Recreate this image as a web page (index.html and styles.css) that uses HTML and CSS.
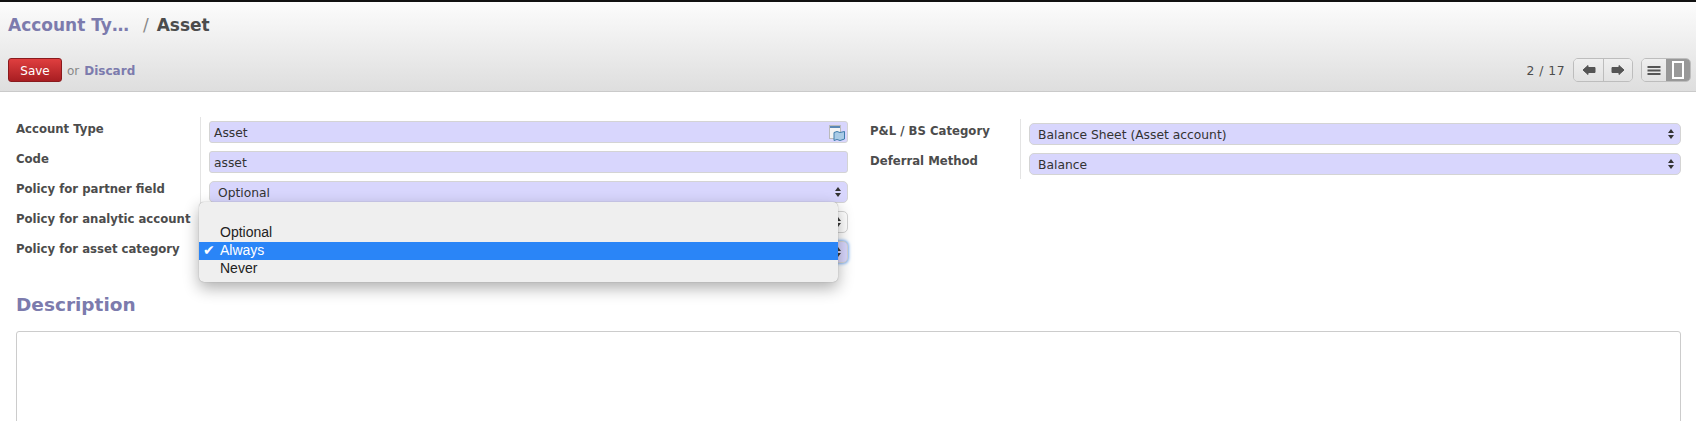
FILE: index.html
```html
<!DOCTYPE html>
<html lang="en">

<head>
  <meta charset="UTF-8">
  <title>Asset - Account Types</title>
  <link rel="stylesheet" href="styles.css">
</head>

<body>
  <header class="control-panel">
    <h2 class="breadcrumb">
      <a href="#" class="crumb-link">Account Ty…</a>
      <span class="crumb-sep">/</span>
      <span class="crumb-current">Asset</span>
    </h2>
    <div class="toolbar">
      <div class="actions">
        <button class="save-btn" type="button">Save</button>
        <span class="or-text">or</span>
        <a href="#" class="discard-link">Discard</a>
      </div>
      <div class="pager-area">
        <span class="pager-count">2 / 17</span>
        <div class="btn-group">
          <button class="group-btn pager-btn" type="button" aria-label="Previous">
            <svg width="14" height="12" viewBox="0 0 14 12"><path d="M1 6 6 1.500V3.500H13V8.500H6V10.500Z" fill="#555" stroke="#555" stroke-linejoin="round"/></svg>
          </button>
          <button class="group-btn pager-btn" type="button" aria-label="Next">
            <svg width="14" height="12" viewBox="0 0 14 12"><path d="M13 6 8 1.500V3.500H1V8.500H8V10.500Z" fill="#555" stroke="#555" stroke-linejoin="round"/></svg>
          </button>
        </div>
        <div class="btn-group">
          <button class="group-btn view-btn" type="button" aria-label="List">
            <svg width="14" height="11" viewBox="0 0 14 11"><path d="M0.500 1h13v2H0.500zM0.500 4.500h13v2H0.500zM0.500 8h13v2H0.500z" fill="#555"/></svg>
          </button>
          <button class="group-btn view-btn view-active" type="button" aria-label="Form">
            <svg width="14" height="18" viewBox="0 0 14 18"><rect x="2" y="1" width="10" height="16" fill="#999" stroke="#fff" stroke-width="2"/></svg>
          </button>
        </div>
      </div>
    </div>
  </header>

  <main class="sheet">
    <div class="columns">
      <div class="field-group group-left">
        <label class="field-label">Account Type</label>
        <div class="field field-required field-many2one">
          <span>Asset</span>
          <svg class="open-icon" width="16" height="16" viewBox="0 0 16 16">
            <rect x="0.500" y="0.500" width="11" height="13" fill="#f4f4f4" stroke="#bbb"/>
            <rect x="1" y="1" width="10" height="2" fill="#5b88b5"/>
            <path d="M5 7.500 8 6.500 11 7.500 15.500 6.500V14L11 15.500 8 14.500 5 15.500Z" fill="#a9cbe6" stroke="#3f7cab"/>
          </svg>
        </div>

        <label class="field-label">Code</label>
        <div class="field field-required"><span>asset</span></div>

        <label class="field-label">Policy for partner field</label>
        <div class="field field-required field-select"><span>Optional</span><i class="updown"></i></div>

        <label class="field-label">Policy for analytic account</label>
        <div class="field field-select"><span></span><i class="updown"></i></div>

        <label class="field-label">Policy for asset category</label>
        <div class="field field-required field-select field-focus"><span></span><i class="updown"></i></div>
      </div>

      <div class="field-group group-right">
        <label class="field-label">P&amp;L / BS Category</label>
        <div class="field field-required field-select"><span>Balance Sheet (Asset account)</span><i class="updown"></i></div>

        <label class="field-label">Deferral Method</label>
        <div class="field field-required field-select"><span>Balance</span><i class="updown"></i></div>
      </div>
    </div>

    <h3 class="section-title">Description</h3>
    <div class="description-box"></div>
  </main>

  <ul class="select-menu">
    <li class="menu-item menu-blank"></li>
    <li class="menu-item">Optional</li>
    <li class="menu-item menu-selected">Always</li>
    <li class="menu-item">Never</li>
  </ul>
</body>

</html>
```

FILE: styles.css
```css
html,
body {
  height: 100%;
}

body {
  margin: 0;
  overflow: hidden;
  background: #fff;
  color: #4c4c4c;
  font-family: "DejaVu Sans", sans-serif;
  font-size: 12px;
}

a {
  color: #7c7bad;
  text-decoration: none;
}

/* top bar */
.control-panel {
  box-sizing: border-box;
  height: 92px;
  border-top: 2px solid #111;
  border-bottom: 1px solid #cacaca;
  padding: 0 5px 0 8px;
  background: linear-gradient(#fcfcfc, #dedede);
}

.breadcrumb {
  display: flex;
  align-items: baseline;
  margin: 0;
  padding-top: 13px;
  height: 33px;
  font-size: 17px;
  line-height: 20px;
  font-weight: 700;
}

.crumb-sep {
  margin: 0 8px 0 14px;
  color: #888;
  font-weight: 400;
}

.crumb-current {
  color: #4c4c4c;
}

.toolbar {
  display: flex;
  justify-content: space-between;
  align-items: center;
  margin-top: 10px;
}

.actions {
  display: flex;
  align-items: center;
  gap: 5px;
}

.save-btn {
  width: 54px;
  height: 24px;
  padding: 2px 0 0;
  border: 1px solid #8a1a1d;
  border-radius: 3px;
  background: linear-gradient(#df3f3f, #a81e22);
  color: #fff;
  font: 400 12px "DejaVu Sans", sans-serif;
}

.or-text {
  padding-top: 2px;
  color: #888;
}

.discard-link {
  padding-top: 2px;
  font-weight: 700;
}

.pager-area {
  display: flex;
  align-items: center;
}

.pager-count {
  margin-right: 8px;
  padding-top: 2px;
  font-size: 12.3px;
  letter-spacing: 0.5px;
}

.btn-group {
  display: flex;
  box-sizing: border-box;
  height: 24px;
  border: 1px solid #bdbdbd;
  border-radius: 5px;
  overflow: hidden;
  margin-right: 8px;
}

.btn-group:last-child {
  margin-right: 0;
}

.group-btn {
  display: flex;
  align-items: center;
  justify-content: center;
  padding: 0;
  border: 0;
  background: linear-gradient(#efefef, #e2e2e2);
}

.pager-btn {
  width: 29px;
}

.pager-btn + .pager-btn {
  border-left: 1px solid #bdbdbd;
}

.view-btn {
  width: 24px;
}

.view-active {
  background: #989898;
}

/* form */
.sheet {
  padding: 0 15px 0 16px;
}

.columns {
  display: flex;
  margin-top: 26px;
}

.field-group {
  display: grid;
  grid-auto-rows: 22px;
  row-gap: 8px;
}

.group-left {
  grid-template-columns: 184px 648px;
  padding-top: 3px;
}

.group-right {
  grid-template-columns: 150px 661px;
  margin: 5px 0 0 22px;
}

.field-label {
  box-sizing: border-box;
  display: flex;
  align-items: center;
  height: 30px;
  margin: -4px -1px -4px 0;
  padding-bottom: 6px;
  border-right: 1px solid #e4e4e4;
  font-weight: 700;
  font-size: 11.7px;
}

.field {
  box-sizing: border-box;
  display: flex;
  align-items: center;
  justify-content: space-between;
  margin-left: 9px;
  height: 22px;
  padding: 0 4px;
  border: 1px solid #d4d4d4;
  border-radius: 3px;
  background: #fff;
  font-size: 12.3px;
  color: #333;
}

.field span {
  padding-top: 2px;
}

.field-required {
  background: #d8d6fd;
}

.field-select {
  padding: 0 6px 0 8px;
  border-radius: 5px;
}

.field-focus {
  box-shadow: 0 0 3px 1px #7fb2f5;
}

.open-icon {
  margin-right: -2px;
  margin-top: 1px;
}

/* the up/down marks of a native select */
.updown {
  display: inline-flex;
  flex-direction: column;
  gap: 2px;
  width: 6px;
}

.updown::before,
.updown::after {
  content: "";
  border-left: 3px solid transparent;
  border-right: 3px solid transparent;
}

.updown::before {
  border-bottom: 4px solid #333;
}

.updown::after {
  border-top: 4px solid #333;
}

.section-title {
  margin: 30px 0 0;
  height: 38px;
  font-size: 18.5px;
  line-height: 24px;
  font-weight: 700;
  color: #7c7bad;
}

.description-box {
  box-sizing: border-box;
  height: 140px;
  border: 1px solid #ccc;
  border-radius: 3px;
}

/* open select menu */
.select-menu {
  position: absolute;
  left: 199px;
  top: 202px;
  box-sizing: border-box;
  width: 639px;
  height: 80px;
  margin: 0;
  padding: 4px 0;
  list-style: none;
  border-radius: 5px;
  background: #efefef;
  box-shadow: 0 0 1px #888, 0 6px 16px rgba(0, 0, 0, 0.32);
  font-family: "Liberation Sans", sans-serif;
  font-size: 14px;
  color: #222;
}

.menu-item {
  height: 18px;
  line-height: 17px;
  padding-left: 21px;
  position: relative;
}

.menu-selected {
  background: #2a85f7;
  color: #fff;
}

.menu-selected::before {
  content: "\2714";
  position: absolute;
  left: 4px;
  font-family: "DejaVu Sans", sans-serif;
  font-size: 14px;
}
```
